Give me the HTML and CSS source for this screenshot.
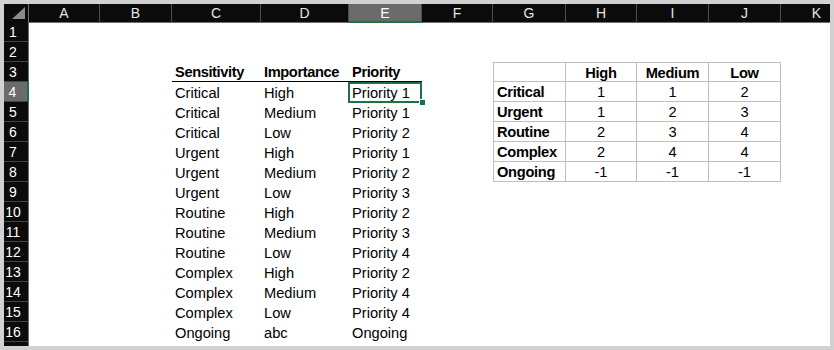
FILE: index.html
```html
<!DOCTYPE html>
<html>
<head>
    <title>Priority lookup</title>
    <link rel="stylesheet" href="styles.css">
</head>
<body>
    <div class="sheet">
        <div class="row head">
            <div class="ch corner">
                <svg width="13" height="12" viewBox="0 0 13 12"><polygon points="0,12 13,12 13,0" fill="#8c8c8c"/></svg>
            </div>
            <div class="ch">A</div>
            <div class="ch">B</div>
            <div class="ch">C</div>
            <div class="ch">D</div>
            <div class="ch on">E</div>
            <div class="ch">F</div>
            <div class="ch">G</div>
            <div class="ch">H</div>
            <div class="ch">I</div>
            <div class="ch">J</div>
            <div class="ch">K</div>
        </div>
        <div class="row"><div class="rh">1</div></div>
        <div class="row"><div class="rh">2</div></div>
        <div class="row">
            <div class="rh">3</div>
            <div class="cell c hd">Sensitivity</div>
            <div class="cell d hd">Importance</div>
            <div class="cell e hd">Priority</div>
            <div class="cell g tb top"></div>
            <div class="cell h tb top mid bold">High</div>
            <div class="cell i tb top mid bold">Medium</div>
            <div class="cell j tb top mid bold">Low</div>
        </div>
        <div class="row">
            <div class="rh on">4</div>
            <div class="cell c">Critical</div>
            <div class="cell d">High</div>
            <div class="cell e sel">Priority 1</div>
            <div class="cell g tb bold">Critical</div>
            <div class="cell h tb mid">1</div>
            <div class="cell i tb mid">1</div>
            <div class="cell j tb mid">2</div>
        </div>
        <div class="row">
            <div class="rh">5</div>
            <div class="cell c">Critical</div>
            <div class="cell d">Medium</div>
            <div class="cell e">Priority 1</div>
            <div class="cell g tb bold">Urgent</div>
            <div class="cell h tb mid">1</div>
            <div class="cell i tb mid">2</div>
            <div class="cell j tb mid">3</div>
        </div>
        <div class="row">
            <div class="rh">6</div>
            <div class="cell c">Critical</div>
            <div class="cell d">Low</div>
            <div class="cell e">Priority 2</div>
            <div class="cell g tb bold">Routine</div>
            <div class="cell h tb mid">2</div>
            <div class="cell i tb mid">3</div>
            <div class="cell j tb mid">4</div>
        </div>
        <div class="row">
            <div class="rh">7</div>
            <div class="cell c">Urgent</div>
            <div class="cell d">High</div>
            <div class="cell e">Priority 1</div>
            <div class="cell g tb bold">Complex</div>
            <div class="cell h tb mid">2</div>
            <div class="cell i tb mid">4</div>
            <div class="cell j tb mid">4</div>
        </div>
        <div class="row">
            <div class="rh">8</div>
            <div class="cell c">Urgent</div>
            <div class="cell d">Medium</div>
            <div class="cell e">Priority 2</div>
            <div class="cell g tb bold">Ongoing</div>
            <div class="cell h tb mid">-1</div>
            <div class="cell i tb mid">-1</div>
            <div class="cell j tb mid">-1</div>
        </div>
        <div class="row">
            <div class="rh">9</div>
            <div class="cell c">Urgent</div>
            <div class="cell d">Low</div>
            <div class="cell e">Priority 3</div>
        </div>
        <div class="row">
            <div class="rh">10</div>
            <div class="cell c">Routine</div>
            <div class="cell d">High</div>
            <div class="cell e">Priority 2</div>
        </div>
        <div class="row">
            <div class="rh">11</div>
            <div class="cell c">Routine</div>
            <div class="cell d">Medium</div>
            <div class="cell e">Priority 3</div>
        </div>
        <div class="row">
            <div class="rh">12</div>
            <div class="cell c">Routine</div>
            <div class="cell d">Low</div>
            <div class="cell e">Priority 4</div>
        </div>
        <div class="row">
            <div class="rh">13</div>
            <div class="cell c">Complex</div>
            <div class="cell d">High</div>
            <div class="cell e">Priority 2</div>
        </div>
        <div class="row">
            <div class="rh">14</div>
            <div class="cell c">Complex</div>
            <div class="cell d">Medium</div>
            <div class="cell e">Priority 4</div>
        </div>
        <div class="row">
            <div class="rh">15</div>
            <div class="cell c">Complex</div>
            <div class="cell d">Low</div>
            <div class="cell e">Priority 4</div>
        </div>
        <div class="row">
            <div class="rh">16</div>
            <div class="cell c">Ongoing</div>
            <div class="cell d">abc</div>
            <div class="cell e">Ongoing</div>
        </div>
        <div class="row"><div class="rh"></div></div>
    </div>
</body>
</html>
```

FILE: styles.css
```css
body {
    margin: 0;
    padding: 4px;
    background-color: #d1d1d1;
    font-family: "Liberation Sans", Arial, sans-serif;
}
.sheet {
    width: 826px;
    height: 342px;
    overflow: hidden;
    background-color: #fff;
}
.row {
    display: grid;
    grid-template-columns: 25px 71px 72px 89px 88px 73px 71px 73px 71px 72px 72px 72px;
    height: 20px;
}
.row.head {
    height: 18px;
}
.ch {
    box-sizing: border-box;
    background-color: #0b0b0b;
    color: #e4e4e4;
    font-size: 14px;
    line-height: 16px;
    padding-top: 1px;
    text-align: center;
    border-right: 1px solid #4c4c4c;
    border-bottom: 1px solid #6e6e6e;
}
.ch.on {
    background-color: #6b6b6b;
    color: #fff;
    border-bottom: 2px solid #1e7145;
}
.corner {
    display: flex;
    justify-content: flex-end;
    align-items: flex-end;
    padding: 0 3px 3px 0;
    border-right-color: #6e6e6e;
}
.rh {
    grid-column: 1;
    box-sizing: border-box;
    background-color: #0b0b0b;
    color: #fff;
    font-size: 14px;
    line-height: 17px;
    padding: 2px 6px 0 0;
    text-align: center;
    border-right: 1px solid #6e6e6e;
    border-bottom: 1px solid #454545;
}
.rh.on {
    background-color: #6b6b6b;
    border-right: 2px solid #1e7145;
}
.cell {
    box-sizing: border-box;
    padding: 2px 3px 0;
    font-size: 14.67px;
    line-height: 18px;
    color: #000;
    white-space: nowrap;
}
.c { grid-column: 4; }
.d { grid-column: 5; }
.e { grid-column: 6; }
.g { grid-column: 8; }
.h { grid-column: 9; }
.i { grid-column: 10; }
.j { grid-column: 11; }
.hd {
    font-weight: bold;
    letter-spacing: -0.4px;
    border-bottom: 1px solid #000;
    line-height: 17px;
}
.bold {
    font-weight: bold;
    letter-spacing: -0.3px;
}
.mid {
    text-align: center;
}
.tb {
    border-right: 1px solid #bfbfbf;
    border-bottom: 1px solid #bfbfbf;
    line-height: 17px;
}
.g.tb {
    border-left: 1px solid #bfbfbf;
}
.tb.top {
    border-top: 1px solid #bfbfbf;
    line-height: 16px;
}
.sel {
    position: relative;
}
.sel::before {
    content: "";
    position: absolute;
    left: -1px;
    top: 0;
    right: 0;
    bottom: -1px;
    border: 2px solid #1e7145;
}
.sel::after {
    content: "";
    position: absolute;
    right: -3px;
    bottom: -3px;
    width: 5px;
    height: 5px;
    background-color: #1e7145;
    border-left: 1px solid #fff;
    border-top: 1px solid #fff;
}
```
